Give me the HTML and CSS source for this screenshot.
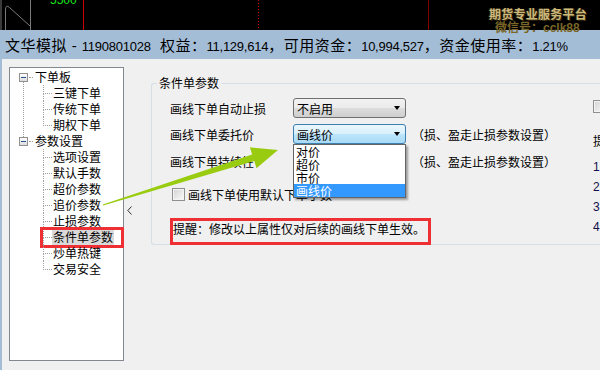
FILE: index.html
```html
<!DOCTYPE html>
<html>
<head>
  <meta charset="UTF-8">
  <title>条件单参数</title>
  <link rel="stylesheet" href="styles.css">
</head>
<body>
  <div class="app">
    <div class="chart">
      <svg class="chart-lines" width="600" height="30" viewBox="0 0 600 30">
        <rect x="0" y="0" width="2" height="30" fill="#3a3a3a"/>
        <path d="M5.5 30V10Q5.5 4 9.5 7.5L30 26" fill="none" stroke="#7a7a7a"/>
        <line x1="30.5" y1="0" x2="30.5" y2="30" stroke="#7a7a7a"/>
        <text x="50" y="4" fill="#19e619" font-size="12" font-family="Liberation Sans, sans-serif">5500</text>
        <line x1="83.5" y1="0" x2="83.5" y2="30" stroke="#cc0000"/>
        <line x1="258.5" y1="0" x2="258.5" y2="30" stroke="#e00000" stroke-dasharray="1 2"/>
        <line x1="428.5" y1="0" x2="428.5" y2="30" stroke="#800000"/>
      </svg>
    </div>

    <div class="account-bar">
      文华模拟 - <span class="num">1190801028</span>&nbsp; 权益：<span class="num">11,129,614</span>，可用资金：<span class="num">10,994,527</span>，资金使用率：<span class="num">1.21%</span>
    </div>

    <div class="watermark">
      <div class="wm-title">期货专业服务平台</div>
      <div class="wm-sub">微信号：cclk88</div>
    </div>

    <div class="main">
      <div class="edge"></div>

      <div class="tree-panel">
        <ul class="tree">
          <li class="node">
            <div class="row"><span class="toggle"></span><span class="label">下单板</span></div>
            <ul class="children">
              <li><span class="label">三键下单</span></li>
              <li><span class="label">传统下单</span></li>
              <li><span class="label">期权下单</span></li>
            </ul>
          </li>
          <li class="node">
            <div class="row"><span class="toggle"></span><span class="label">参数设置</span></div>
            <ul class="children">
              <li><span class="label">选项设置</span></li>
              <li><span class="label">默认手数</span></li>
              <li><span class="label">超价参数</span></li>
              <li><span class="label">追价参数</span></li>
              <li><span class="label">止损参数</span></li>
              <li class="selected"><span class="label">条件单参数</span><span class="mark"></span></li>
              <li><span class="label">炒单热键</span></li>
              <li><span class="label">交易安全</span></li>
            </ul>
          </li>
        </ul>
      </div>

      <div class="splitter">
        <svg width="5" height="9" viewBox="0 0 5 9">
          <polyline points="4.5,0.5 0.8,4.5 4.5,8.5" fill="none" stroke="#303030"/>
        </svg>
      </div>

      <div class="settings">
        <div class="group">
          <div class="group-title">条件单参数</div>
          <div class="group-body">
            <div class="col-main">
              <div class="field r1">
                <span class="field-label">画线下单自动止损</span>
                <div class="combo"><span>不启用</span><i class="caret"></i></div>
              </div>
              <div class="field r2">
                <span class="field-label">画线下单委托价</span>
                <div class="combo-wrap">
                  <div class="combo focus"><span>画线价</span><i class="caret"></i></div>
                  <ul class="droplist">
                    <li>对价</li>
                    <li>超价</li>
                    <li>市价</li>
                    <li class="active">画线价</li>
                  </ul>
                </div>
                <span class="field-note">（损、盈走止损参数设置）</span>
              </div>
              <div class="field r3">
                <span class="field-label">画线下单持续性</span>
                <div class="combo-space"></div>
                <span class="field-note">（损、盈走止损参数设置）</span>
              </div>
              <div class="check-row">
                <span class="checkbox"></span>
                <span>画线下单使用默认下单手数</span>
              </div>
              <div class="hint">提醒：修改以上属性仅对后续的画线下单生效。</div>
            </div>

            <div class="col-side">
              <span class="checkbox"></span>
              <div class="tips-title">提示：</div>
              <ol class="tips">
                <li>1、画线下单</li>
                <li>2、画线下单</li>
                <li>3、画线下单</li>
                <li>4、画线下单</li>
              </ol>
            </div>
          </div>
        </div>
      </div>
    </div>

    <svg class="annotation" width="600" height="370" viewBox="0 0 600 370">
      <polygon points="102.8,204.4 252.1,154.5 249.9,147.3 278,150 256.5,168.3 254.3,161.1 103.2,205.6" fill="#99cc11"/>
    </svg>
  </div>
</body>
</html>
```

FILE: styles.css
```css
html, body {
  margin: 0;
}

body {
  width: 600px;
  height: 370px;
  overflow: hidden;
  background-color: #f0f0f0;
  color: #000;
  font-family: "Noto Sans CJK SC", sans-serif;
  font-size: 12px;
}

.app {
  position: relative;
  height: 370px;
}

/* chart strip on top */
.chart {
  height: 30px;
  background-color: #000;
}

.chart-lines {
  display: block;
}

.watermark {
  position: absolute;
  top: 6px;
  left: 489px;
  font-size: 12px;
  font-weight: bold;
  line-height: 15px;
  white-space: nowrap;
}

.wm-title {
  color: #cdb97e;
  letter-spacing: 0.25px;
  text-shadow: 1px 1px 0 #3e3210, -1px 0 0 #3e3210;
}

.wm-sub {
  padding-left: 6px;
  color: #7a6628;
  font-family: "Liberation Sans", "Noto Sans CJK SC", sans-serif;
}

.account-bar {
  height: 29px;
  box-sizing: border-box;
  padding: 3px 0 0 5px;
  line-height: 26px;
  background-color: #a4bdd7;
  font-family: "Liberation Sans", "Noto Sans CJK SC", sans-serif;
  font-size: 15px;
  letter-spacing: 0.5px;
  white-space: nowrap;
}

.account-bar .num {
  font-size: 13px;
  letter-spacing: -0.25px;
}

/* lower part */
.main {
  display: flex;
  height: 311px;
}

.edge {
  width: 2px;
  background-color: #a4bdd7;
}

.tree-panel {
  box-sizing: border-box;
  width: 115px;
  height: 294px;
  margin: 8px 0 0 7px;
  border: 1px solid #828790;
  background-color: #fff;
}

.tree, .children {
  list-style: none;
  margin: 0;
  padding: 0;
}

.tree {
  padding-top: 1px;
  line-height: 16px;
}

.tree li {
  position: relative;
}

.row {
  position: relative;
  height: 16px;
  padding-left: 24px;
}

.row::after {
  content: "";
  position: absolute;
  left: 19px;
  top: 8px;
  width: 4px;
  border-top: 1px dotted #a0a0a0;
}

.toggle {
  position: absolute;
  left: 9px;
  top: 4px;
  width: 9px;
  height: 9px;
  box-sizing: border-box;
  border: 1px solid #919191;
  background: linear-gradient(#fff, #dcdcdc);
}

.toggle::after {
  content: "";
  position: absolute;
  left: 1px;
  top: 3px;
  width: 5px;
  height: 1px;
  background-color: #2a4e96;
}

.node:first-child::after {
  content: "";
  position: absolute;
  left: 13px;
  top: 13px;
  bottom: -4px;
  border-left: 1px dotted #a0a0a0;
}

.children li {
  height: 16px;
  padding-left: 42px;
}

.children li::before {
  content: "";
  position: absolute;
  left: 33px;
  top: 0;
  width: 8px;
  height: 8px;
  border-left: 1px dotted #a0a0a0;
  border-bottom: 1px dotted #a0a0a0;
}

.children li:not(:last-child)::after {
  content: "";
  position: absolute;
  left: 33px;
  top: 9px;
  bottom: 0;
  border-left: 1px dotted #a0a0a0;
}

.label {
  display: inline-block;
  padding: 0 1px;
}

.selected .label {
  background-color: #d9d9d9;
}

.selected .mark {
  position: absolute;
  left: 30px;
  top: -2px;
  width: 84px;
  height: 21px;
  box-sizing: border-box;
  border: 3px solid #ee3035;
}

.splitter {
  width: 27px;
  box-sizing: border-box;
  padding: 147px 0 0 3px;
}

.splitter svg {
  display: block;
}

.settings {
  flex: 1;
  min-width: 0;
}

.group {
  width: 520px;
  margin-top: 24px;
  border: 1px solid #d5dfe5;
  border-right: 0;
  border-radius: 3px 0 0 3px;
}

.group-title {
  width: max-content;
  margin: -9px 0 0 5px;
  padding: 0 2px;
  line-height: 16px;
  background-color: #f0f0f0;
}

.group-body {
  display: flex;
}

.col-main {
  width: 441px;
  box-sizing: border-box;
  padding-left: 18px;
}

.field {
  display: flex;
  align-items: center;
  height: 20px;
}

.r1 { margin-top: 7px; }
.r2 { margin-top: 6px; }
.r3 { margin-top: 7px; }

.field-label {
  width: 123px;
}

.combo {
  display: flex;
  align-items: center;
  width: 113px;
  height: 20px;
  box-sizing: border-box;
  padding: 0 5px 0 3px;
  border: 1px solid #707070;
  border-radius: 3px;
  background: linear-gradient(#f2f2f2, #ebebeb 50%, #dddddd 50%, #cfcfcf);
}

.combo.focus {
  border-color: #3c7fb1;
  background: linear-gradient(#eaf6fd, #d9f0fc 50%, #bee6fd 50%, #a7d9f5);
}

.caret {
  margin-left: auto;
  border-top: 4px solid #000;
  border-left: 3.5px solid transparent;
  border-right: 3.5px solid transparent;
}

.combo-wrap {
  position: relative;
}

.combo-space {
  width: 113px;
}

.field-note {
  margin-left: 6px;
}

.droplist {
  position: absolute;
  left: 0;
  top: 20px;
  width: 113px;
  box-sizing: border-box;
  margin: 0;
  padding: 0;
  list-style: none;
  border: 1px solid #646464;
  background-color: #fff;
  box-shadow: 2px 2px 2px rgba(0, 0, 0, 0.35);
  line-height: 13px;
}

.droplist li {
  height: 13px;
  padding-left: 2px;
}

.droplist .active {
  background-color: #3399ff;
  color: #fff;
}

.check-row {
  display: flex;
  align-items: center;
  height: 20px;
  margin-top: 13px;
  padding-left: 2px;
}

.checkbox {
  display: block;
  width: 13px;
  height: 13px;
  box-sizing: border-box;
  margin-right: 3px;
  border: 1px solid #8e8f8f;
  background: linear-gradient(135deg, #d2d2d2, #fbfbfb);
  box-shadow: inset 0 0 0 1px #f4f4f4;
}

.hint {
  width: max-content;
  margin: 14px 0 -1px 0;
  padding: 0 3px 5px 0;
  border: 3px solid #ee3035;
  line-height: 16px;
}

.col-side {
  padding-top: 9px;
  white-space: nowrap;
}

.tips-title {
  margin-top: 20px;
  line-height: 16px;
}

.tips {
  list-style: none;
  margin: 8px 0 0 0;
  padding: 0;
  line-height: 20px;
  font-family: "Liberation Sans", "Noto Sans CJK SC", sans-serif;
  color: #10104a;
}

.annotation {
  position: absolute;
  left: 0;
  top: 0;
  pointer-events: none;
}
```
